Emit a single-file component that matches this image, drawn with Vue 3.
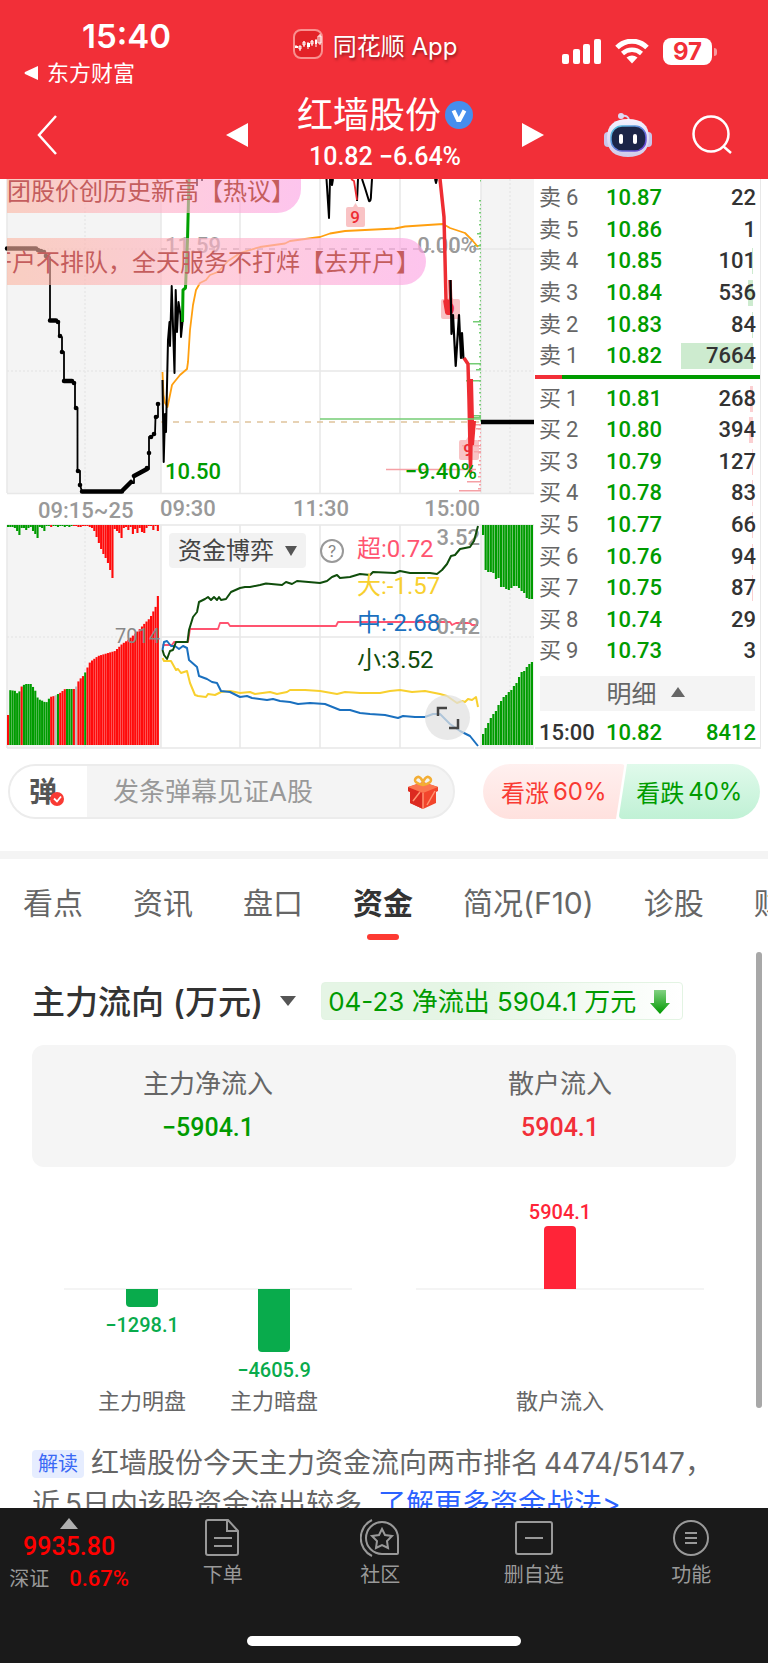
<template>
  <div class="app">
    <header class="header">
      <div class="status">
        <div class="status-left">
          <div class="time">15:40</div>
          <a href="#" class="back-app">
            <svg width="15" height="14" viewBox="0 0 15 14"><path d="M14 0v14L1 8q-1-1 0-2z" fill="#fff" /></svg>
            <span>东方财富</span>
          </a>
        </div>
        <div class="app-name">
          <svg width="30" height="30" viewBox="0 0 30 30">
            <rect x="1" y="1" width="28" height="28" rx="7" fill="#e32228" stroke="#f9908f" stroke-width="2" />
            <g stroke="#fff" stroke-width="1" fill="none">
              <path d="M3 19v-3M7 22v-5M11 18v-6M15 20v-7M19 17v-6M23 18v-8M27 16V5" />
              <path d="M6 17h2v3H6zM10 13h2v3h-2zM18 12h2v3h-2zM25 7h3v7h-3z" />
            </g>
            <path d="M2 17h3v2H2zM14 14h3v4h-3zM22 11h2v4h-2z" fill="#fff" />
          </svg>
          <span>同花顺 App</span>
        </div>
        <div class="status-right">
          <svg width="39" height="25" viewBox="0 0 39 25" fill="#fff">
            <rect x="0" y="15" width="7" height="10" rx="2" />
            <rect x="11" y="10" width="7" height="15" rx="2" />
            <rect x="21" y="5" width="7" height="20" rx="2" />
            <rect x="32" y="0" width="7" height="25" rx="2" />
          </svg>
          <svg width="34" height="25" viewBox="0 0 34 25">
            <path d="M2 8.5C10.500 0 23.500 0 32 8.500" fill="none" stroke="#fff" stroke-width="5" />
            <path d="M7.500 14.500C13 9.500 21 9.500 26.500 14.500" fill="none" stroke="#fff" stroke-width="4.500" />
            <path d="M11.500 18.500Q17 14.500 22.500 18.500L17 24.500z" fill="#fff" />
          </svg>
          <div class="battery">97</div>
        </div>
      </div>
      <nav class="nav">
        <button class="icon-btn back" aria-label="返回">
          <svg width="22" height="42" viewBox="0 0 22 42"><path d="M20 2L3 21l17 19" fill="none" stroke="#fff" stroke-width="2.500" /></svg>
        </button>
        <div class="stock">
          <button class="icon-btn" aria-label="上一只">
            <svg width="24" height="26" viewBox="0 0 24 26"><path d="M23 1v24L1 13z" fill="#fff" /></svg>
          </button>
          <div class="stock-title">
            <h1>
              红墙股份
              <svg width="28" height="28" viewBox="0 0 28 28">
                <circle cx="14" cy="14" r="14" fill="#468eed" />
                <path d="M8.500 9.500L13 19h1.500l5-9.500" fill="none" stroke="#fff" stroke-width="4" />
              </svg>
            </h1>
            <p class="din">10.82 −6.64%</p>
          </div>
          <button class="icon-btn" aria-label="下一只">
            <svg width="24" height="26" viewBox="0 0 24 26"><path d="M1 1v24l22-12z" fill="#fff" /></svg>
          </button>
        </div>
        <div class="tools">
          <button class="icon-btn" aria-label="智能助手">
            <svg width="48" height="46" viewBox="0 0 48 46">
              <defs>
                <linearGradient id="head" x1="0" y1="0" x2="0" y2="1">
                  <stop offset="0" stop-color="#f4f2ff" /><stop offset="1" stop-color="#cfcbea" />
                </linearGradient>
                <linearGradient id="ring" x1="0" y1="0" x2="1" y2="1">
                  <stop offset="0" stop-color="#58cbe0" /><stop offset="1" stop-color="#6a35d5" />
                </linearGradient>
              </defs>
              <path d="M18 4q7-1 7 5" fill="none" stroke="#d9d5ef" stroke-width="2" />
              <circle cx="17" cy="4" r="3" fill="#dedaf3" />
              <rect x="0" y="20" width="8" height="15" rx="4" fill="#c9c5ea" />
              <rect x="40" y="20" width="8" height="15" rx="4" fill="#c9c5ea" />
              <path d="M24 7C38 7 45 13 45 26S37 45 24 45 3 39 3 26 10 7 24 7z" fill="url(#head)" />
              <rect x="7" y="14" width="35" height="25" rx="11" fill="#1b2547" stroke="url(#ring)" stroke-width="1.500" />
              <rect x="15" y="22" width="4" height="10" rx="2" fill="#fff" />
              <rect x="29" y="22" width="4" height="10" rx="2" fill="#fff" />
            </svg>
          </button>
          <button class="icon-btn" aria-label="搜索">
            <svg width="40" height="40" viewBox="0 0 40 40" fill="none" stroke="#fff" stroke-width="2.500">
              <circle cx="19" cy="19" r="17.500" /><path d="M31 31l8 7" />
            </svg>
          </button>
        </div>
      </nav>
    </header>

    <main class="main">
      <section class="quote">
        <div class="chart">
          <svg class="chart-svg" viewBox="0 179 535 571">
            <path d="M7 179h154v314H7zM481 179h53v314h-53zM7 525h154v223H7zM481 525h53v223h-53z" fill="#f4f4f4" />
            <path class="grid" d="M161 179v314M240 179v314M320 179v314M400 179v314M481 179v314M161 525v223M240 525v223M320 525v223M400 525v223M481 525v223M161 371h320M481 249h53M7 493.500h527M7 525h527M161 637h320M7 748h527M7 179v314M7 525v223" />
            <path class="grid dotted" d="M85 179v314M510 179v314M85 525v223M510 525v223M7 371h154M7 249h154M481 371h53M7 637h154M481 637h53" />
            <path d="M161 249h320" stroke="#aaa" stroke-width="1.500" stroke-dasharray="6 6" />
            <path d="M161 422h320" stroke="#dfc49c" stroke-width="1.500" stroke-dasharray="6 6" />

            <!-- 价格分布 -->
            <rect v-for="(t, i) in profile" :key="'p' + i" :x="481 - t.w" :y="t.y" :width="t.w" height="1.500" :fill="t.y < 421 ? '#74cc74' : '#f5a0a5'" />

            <text x="165" y="253" class="num muted bold">11.59</text>
            <text x="477" y="253" class="num muted bold end">0.00%</text>

            <polyline :points="avgLine" class="line" stroke="#ff9f0f" stroke-width="1.800" />
            <polyline :points="preLine" class="line" stroke="#000" stroke-width="1.800" />
            <path d="M7 248.500h29M50 320.500h6M64 381h8M82 491.500h40M134 476l13-7M122 491l9-9" fill="none" stroke="#000" stroke-width="4.500" stroke-linecap="round" />
            <circle v-for="(d, i) in preDots" :key="'d' + i" :cx="d[0]" :cy="d[1]" r="2.300" />
            <polyline :points="openLine" class="line" stroke="#000" stroke-width="2" />
            <polyline points="182.500,322 183,290 185.500,288 187.500,240 189,179" class="line" stroke="#00a000" stroke-width="3" />
            <path d="M197 179v7M202 179v2M326.500 179L329 218L330 179M331 179l1 6l1-6M357 201l1-22M362 179l3 9l4 13q2 1 2-6l1-16M435 179l1 4l1-4" class="line" stroke="#000" stroke-width="2" />
            <path d="M351 179l3 2l3 19" class="line" stroke="#ee2d33" stroke-width="1.800" />

            <g fill="#f6a9ac" fill-opacity=".7">
              <path d="M348 207h5l2.500-4l2.500 4h5q2 0 2 2v16q0 2-2 2h-15q-2 0-2-2v-16q0-2 2-2z" />
              <path d="M443 299h5l2.500-4l2.500 4h5q2 0 2 2v16q0 2-2 2h-15q-2 0-2-2v-16q0-2 2-2z" />
              <path d="M461 440h5l2.500-4l2.500 4h6q2 0 2 2v16q0 2-2 2h-16q-2 0-2-2v-16q0-2 2-2z" />
            </g>
            <text x="355" y="223" class="tag">9</text>
            <text x="450" y="315" class="tag">9</text>
            <text x="468" y="456" class="tag">9</text>

            <polyline points="440,179 444,217 446,300 447,312 451,312 450,280" class="line" stroke="#ee2d33" stroke-width="3.500" />
            <path d="M446 300l2 12h3" class="line" stroke="#ee2d33" stroke-width="6" />
            <polyline points="450.500,280 451.500,334 453,315 455.700,366 459,315 461,358 462,333 463.500,359" class="line" stroke="#000" stroke-width="2.200" />
            <polyline points="464,358 468,364 469,400 470.500,472 471,440" class="line" stroke="#ee2d33" stroke-width="3.500" />
            <path d="M468 379h5l1 42h2l-2 24l-5 1z" fill="#ee2d33" />
            <path d="M320 419h161" stroke="#74cc74" stroke-width="1.500" />
            <path d="M386 469.500h90" stroke="#f5a0a5" stroke-width="1.500" />
            <path d="M481 422h53" stroke="#000" stroke-width="4.500" />

            <text x="165" y="479" class="num green bold">10.50</text>
            <text x="477" y="479" class="num green bold end">−9.40%</text>

            <text x="38" y="518" class="num muted bold">09:15~25</text>
            <text x="160" y="516" class="num muted bold">09:30</text>
            <text x="321" y="516" class="num muted bold middle">11:30</text>
            <text x="480" y="516" class="num muted bold end">15:00</text>

            <!-- 竞价量 -->
            <rect v-for="(b, i) in volumeBars" :key="'v' + i" :x="b.x" :y="b.y" :width="b.w" :height="b.h" :fill="b.c" />

            <text x="160" y="643" class="end volume">7014</text>
            <text x="480" y="545" class="num muted bold end">3.52</text>

            <!-- 资金博弈 -->
            <polyline :points="flow.super" class="line" stroke="#ff5470" stroke-width="1.800" />
            <polyline :points="flow.large" class="line" stroke="#f8d02f" stroke-width="2" />
            <polyline :points="flow.medium" class="line" stroke="#1a70bf" stroke-width="2" />
            <polyline :points="flow.small" class="line" stroke="#0f4d0b" stroke-width="2" />
            <text x="480" y="634" class="num muted bold end">0.42</text>
            <text v-for="(l, i) in legend" :key="l.text" x="357" :y="557 + i * 37" class="legend" :fill="l.color">{{ l.text }}</text>
          </svg>

          <div class="danmu">
            <div class="danmu-item first"><span>团股价创历史新高【热议】</span></div>
            <div class="danmu-item second"><span>开户不排队，全天服务不打烊【去开户】</span></div>
          </div>

          <div class="indicator">
            <label class="indicator-select">
              <select v-model="indicator" aria-label="指标">
                <option>资金博弈</option>
              </select>
              <svg width="12" height="10" viewBox="0 0 12 10"><path d="M0 0h12L6 10z" fill="#555" /></svg>
            </label>
            <button class="help" aria-label="说明">?</button>
          </div>

          <button class="expand" aria-label="全屏">
            <svg width="24" height="24" viewBox="0 0 24 24" fill="none" stroke="#444" stroke-width="2.500"><path d="M2 10V2h9M13 22h9v-9" /></svg>
          </button>
        </div>

        <div class="book">
          <div class="rows sells">
            <div v-for="r in sells" :key="r.label" class="row">
              <span class="lv">卖<i>{{ r.label }}</i></span>
              <span class="price">{{ r.price }}</span>
              <span class="qty"><b class="depth" :style="{ width: depth(r.qty) }"></b><em>{{ r.qty }}</em></span>
            </div>
          </div>
          <div class="ratio"></div>
          <div class="rows buys">
            <div v-for="r in buys" :key="r.label" class="row">
              <span class="lv">买<i>{{ r.label }}</i></span>
              <span class="price">{{ r.price }}</span>
              <span class="qty"><b class="depth" :style="{ width: depth(r.qty) }"></b><em>{{ r.qty }}</em></span>
            </div>
          </div>
          <button class="detail">
            明细
            <svg width="14" height="10" viewBox="0 0 14 10"><path d="M0 10h14L7 0z" fill="#666" /></svg>
          </button>
          <div class="row last">
            <span class="deal-time">15:00</span>
            <span class="price">10.82</span>
            <span class="qty"><em>8412</em></span>
          </div>
        </div>
      </section>

      <section class="vote">
        <div class="comment">
          <button class="danmu-toggle" aria-label="弹幕开关">
            弹
            <svg width="14" height="14" viewBox="0 0 14 14"><circle cx="7" cy="7" r="7" fill="#f93a33" /><path d="M4 6.500l3 3l4-5" fill="none" stroke="#fff" stroke-width="1.800" /></svg>
          </button>
          <input v-model="comment" type="text" placeholder="发条弹幕见证A股" aria-label="发条弹幕">
          <button class="icon-btn gift" aria-label="礼物">
            <svg width="32" height="34" viewBox="0 0 32 34">
              <path d="M1 12l15-5l15 5v4l-2 1v11l-13 6l-13-6V17l-2-1z" fill="#f2452c" />
              <path d="M1 12l15 6v16L3 28V17l-2-1z" fill="#dc2a20" />
              <path d="M1 12l15-5l15 5l-15 6z" fill="#fb7650" />
              <path d="M16 18v16M6 26l7-9M20 30l8-14" stroke="#ff9270" stroke-width="1.500" />
              <path d="M16 10C10 9 6 6 9 3s7 1 7 7c0-6 4-10 7-7s-1 6-7 7z" fill="none" stroke="#f3ae35" stroke-width="2.500" />
            </svg>
          </button>
        </div>
        <div class="sides">
          <button class="side up"><span>看涨</span><span>60%</span></button>
          <button class="side down"><span>看跌</span><span>40%</span></button>
        </div>
      </section>

      <nav class="tabs">
        <button v-for="t in tabs" :key="t" :class="{ active: activeTab === t }" @click="activeTab = t">{{ t }}</button>
      </nav>

      <section class="funds">
        <div class="funds-head">
          <h2>主力流向 (万元)</h2>
          <button class="icon-btn" aria-label="切换">
            <svg width="16" height="10" viewBox="0 0 16 10"><path d="M0 0h16L8 10z" fill="#555" /></svg>
          </button>
          <div class="net">
            <span>04-23 净流出 5904.1 万元</span>
            <svg width="20" height="25" viewBox="0 0 20 25">
              <defs>
                <linearGradient id="down" x1="0" y1="0" x2="0" y2="1">
                  <stop offset="0" stop-color="#82d182" /><stop offset="1" stop-color="#009900" />
                </linearGradient>
              </defs>
              <path d="M4 1h12v13h4L10 25L0 14h4z" fill="url(#down)" />
            </svg>
          </div>
        </div>

        <div class="card">
          <div><p>主力净流入</p><strong class="green">−5904.1</strong></div>
          <div><p>散户流入</p><strong class="red">5904.1</strong></div>
        </div>

        <div class="bars">
          <div v-for="(group, g) in barGroups" :key="g" class="bar-group">
            <div v-for="b in group" :key="b.name" class="bar-col" :class="b.value > 0 ? 'pos' : 'neg'">
              <div class="upper">
                <template v-if="b.value > 0"><span>{{ b.text }}</span><i :style="{ height: b.height + 'px' }"></i></template>
              </div>
              <div class="lower">
                <template v-if="b.value < 0"><i :style="{ height: b.height + 'px' }"></i><span>{{ b.text }}</span></template>
              </div>
              <p>{{ b.name }}</p>
            </div>
          </div>
        </div>

        <p class="explain">
          <span class="explain-tag">解读</span>红墙股份今天主力资金流向两市排名<span class="figure">4474/5147</span>，<br>近<span class="figure">5</span>日内该股资金流出较多, <a href="#">了解更多资金战法&gt;</a>
        </p>
        <div class="scrollbar"></div>
      </section>
    </main>

    <footer class="footer">
      <div class="footer-row">
        <button class="index">
          <svg width="18" height="11" viewBox="0 0 18 11"><path d="M0 11h18L9 0z" fill="#b0b0b0" /></svg>
          <strong>9935.80</strong>
          <span class="index-sub"><span>深证</span><b>0.67%</b></span>
        </button>
        <button class="item">
          <svg width="40" height="40" viewBox="0 0 40 40"><path d="M5 2h20l10 11v22q0 2-2 2H5q-2 0-2-2V4q0-2 2-2zM24 3v10h10M11 20h18M11 28h18" /></svg>
          下单
        </button>
        <button class="item">
          <svg width="40" height="40" viewBox="0 0 40 40">
            <path d="M37 36H22A16 16 0 1 1 38 20v15q0 1-1 1zM12 2A20 20 0 0 0 12 38" />
            <path d="M22 11l3 6l7 1l-5 5l1 7l-6-3l-6 3l1-7l-5-5l7-1z" />
          </svg>
          社区
        </button>
        <button class="item">
          <svg width="40" height="40" viewBox="0 0 40 40"><rect x="2" y="4" width="36" height="32" rx="2" /><path d="M11 20h18" /></svg>
          删自选
        </button>
        <button class="item">
          <svg width="40" height="40" viewBox="0 0 40 40"><circle cx="20" cy="20" r="17" /><path d="M14 15h12M14 20h12M14 25h12" /></svg>
          功能
        </button>
      </div>
      <div class="home"></div>
    </footer>
  </div>
</template>

<script setup>
import { ref } from 'vue';

const indicator = ref('资金博弈');
const comment = ref('');
const activeTab = ref('资金');
const tabs = ['看点', '资讯', '盘口', '资金', '简况(F10)', '诊股', '财务'];

const sells = [
  { label: 6, price: '10.87', qty: 22 },
  { label: 5, price: '10.86', qty: 1 },
  { label: 4, price: '10.85', qty: 101 },
  { label: 3, price: '10.84', qty: 536 },
  { label: 2, price: '10.83', qty: 84 },
  { label: 1, price: '10.82', qty: 7664 }
];

const buys = [268, 394, 127, 83, 66, 94, 87, 29, 3].map((qty, i) => ({
  label: i + 1,
  price: (10.81 - i * 0.01).toFixed(2),
  qty
}));

const depth = (qty) => Math.round((qty / 7664) * 72) + 'px';

const legend = [
  { text: '超:0.72', color: '#ff5470' },
  { text: '大:-1.57', color: '#f8d02f' },
  { text: '中:-2.68', color: '#1a70bf' },
  { text: '小:3.52', color: '#0f4d0b' }
];

const barGroups = [
  [
    { name: '主力明盘', value: -1298.1, text: '−1298.1', height: 18 },
    { name: '主力暗盘', value: -4605.9, text: '−4605.9', height: 63 }
  ],
  [{ name: '散户流入', value: 5904.1, text: '5904.1', height: 63 }]
];

// 分时图
const avgLine = '162.500,372 163.500,395 165,403 167.500,407 170,395 172,385 173.500,383 180,375 187,369 188,362 190,330 193,305 196,290 200,283 206,280 210,275 218,272 228,261 240,253 260,247 285,243.500 290,241 320,237 330,233.500 345,231 395,228.500 405,226.500 443,224 450,228 465,233 472,240 478,247';
const preLine = '7,248.500 36,248.500 40,251 45,253 46,256 50,257 50,320 56,320 59,323 59,336 62,337 62,352 64,352 64,381 72,381 75,384 75,408 77.500,408 77.500,471 80,471 80,485 82,491.500 122,491.500 130,483 134,483 134,476 142,472 147,469 149,469 149,453 149,437 151,437 155,434 155.500,417 158,417 158,404';
const openLine = '162.500,380 163.700,462 165,414 166,432 168,340 169.500,322 170,346 171.700,286 174.500,373 175.700,290 177,332 178.500,302 180.500,315 181,337 182.500,322';
const preDots = [[38, 250], [41, 251], [44, 252], [46, 256], [58, 322], [60, 336], [62, 352], [74, 383], [76, 408], [78, 471], [80, 485], [149, 453], [147, 468], [151, 437], [154, 434], [156, 417], [158, 404]];

const bigTicks = [[180, 1], [233, 4], [245, 7], [321, 8], [324, 3], [363, 14], [369, 5], [380, 15], [415, 11], [417, 11], [424, 10], [428, 5], [445, 19], [451, 7], [481, 14], [490, 22]];
const profile = bigTicks.map(([y, w]) => ({ y, w }));
for (let y = 200; y < 492; y += 4) {
  profile.push({ y, w: 1 + ((y * 7) % 3) * (y > 421 ? 1 : 0.5) });
}

// 资金博弈曲线
const flow = {
  super: '162.500,645 172,645 174,642 188,642 190,629 218,629 220,623 228,623 230,626 336,626 338,622 450,622 452,625 456,623 470,623 472,625 478,625',
  large: '162.500,658 164,661 171,661 176,670 178,669 181,673 187,671 190,683 195,695 198,696 206,697 208,694 215,695 221,692 230,691 240,693 250,692 255,694 270,692 277,694 287,692 290,690 305,690 320,691 337,694 345,692 360,693 380,693 390,691 400,690 412,692 425,691 440,694 447,696 457,703 462,701 465,702 468,699 472,700 476,697 478,707',
  medium: '162.500,650 164,642 167,641 171,646 175,646 179,649 183,646 187,648 189,660 197,667 199,676 207,679 212,682 217,683 221,691 230,692 240,697 247,696 252,698 267,700 273,699 280,701 290,702 298,704 310,703 325,704 340,710 350,710 360,713 370,714 385,715 398,718 403,716 415,717 425,717 433,714 440,714 450,724 460,731 466,734 470,736 478,746',
  small: '162.500,650 164,655 167,659 170,651 173,650 176,642 187.500,642 189,630 193,617 197,612 199,602 205,599 208,597 211,600 214,597 217,600 219,597 221,600 226,599 231,592 240,588 245,587 250,587 260,585 266,583.500 282,585 286,582 292,584 297,581 320,583 327,581 332,577 337,575 340,578 350,577 360,574 370,575 373,572 395,573 400,571 410,573 430,573 437,574 442,570 447,564 451,556 455,555 460,549 470,547 474,541 478,526'
};

const interpolate = (keys, x) => {
  const i = keys.findIndex(k => k[0] >= x);
  if (i < 0) return keys[keys.length - 1][1];
  if (i === 0) return keys[0][1];
  const [x0, y0] = keys[i - 1];
  const [x1, y1] = keys[i];
  return y0 + ((y1 - y0) * (x - x0)) / (x1 - x0);
};

const RED = '#ff0a0a';
const GREEN = '#009b00';
const GREY = '#bbbbbb';

const auctionTops = [[8, 715], [9, 690], [16, 691], [18, 695], [21, 687], [25, 684], [31, 684], [35, 690], [38, 699], [43, 701], [46, 703], [50, 697], [54, 696], [60, 693], [65, 689], [75, 689], [79, 680], [84, 675], [90, 662], [98, 656], [108, 653], [115, 651], [122, 644], [128, 640], [138, 631], [145, 623], [150, 618], [156, 606], [158, 595]];
const auctionHang = [2, 2, 2, 3, 6, 10, 3, 3, 5, 3, 2, 6, 9, 13, 2, 3, 6, 1, 1, 2, 1, 1, 2, 1, 1, 2, 1, 2, 1, 1, 1, 2, 2, 1, 1, 1, 2, 3, 6, 12, 18, 24, 29, 33, 38, 45, 53, 4, 6, 8, 13, 3, 2, 5, 2, 9, 4, 8, 3, 7, 8, 3, 1, 1, 5, 1, 6];
const closeHang = [10, 45, 47, 47, 48, 54, 53, 62, 62, 64, 65, 63, 61, 61, 63, 66, 68, 73, 74, 74];
const closeTops = [734, 728, 723, 718, 714, 711, 705, 701, 697, 695, 692, 690, 686, 683, 677, 672, 671, 667, 664, 662];

const volumeBars = [];
const green = [22, 26, 27, 28, 34];
auctionHang.forEach((h, i) => {
  const x = 7 + i * 2.27;
  const top = interpolate(auctionTops, x + 1);
  let c = i > 18 ? RED : GREEN;
  if (i === 0 || i === 6) c = RED;
  if (i === 21 || i === 30) c = GREY;
  if (green.includes(i)) c = GREEN;
  volumeBars.push({ x, y: top, w: 2.1, h: 745 - top, c });
  volumeBars.push({ x, y: 525, w: 2.1, h, c: i > 28 || i === 19 ? RED : GREEN });
});
closeHang.forEach((h, i) => {
  const x = 482 + i * 2.57;
  volumeBars.push({ x, y: 525, w: 2.2, h, c: GREEN });
  volumeBars.push({ x, y: closeTops[i], w: 2.2, h: 745 - closeTops[i], c: GREEN });
});
</script>

<style>
body {
  background-color: #fff;
}
</style>

<style scoped>
.app {
  height: 100vh;
  display: flex;
  flex-direction: column;
  background-color: #fff;
  color: #333;
  font-family: Inter, 'Noto Sans CJK SC', sans-serif;
}

.app * {
  box-sizing: border-box;
}

h1, h2, p {
  margin: 0;
  font-weight: 400;
}

button {
  padding: 0;
  border: none;
  background: none;
  font-family: inherit;
  color: inherit;
  cursor: pointer;
}

svg {
  display: block;
}

i, em {
  font-style: normal;
}

a {
  text-decoration: none;
}

.icon-btn {
  display: flex;
}

/* 顶部 */
.header {
  flex: none;
  height: 179px;
  background-color: #f22f38;
  color: #fff;
}

.status {
  display: grid;
  grid-template-columns: 1fr auto 1fr;
  height: 90px;
  padding: 14px 56px 0 24px;
}

.status-left {
  min-width: 0;
}

.time {
  padding-left: 58px;
  font-size: 33px;
  font-weight: 600;
  line-height: 44px;
}

.back-app {
  display: flex;
  align-items: center;
  gap: 8px;
  color: #fff;
  font-size: 22px;
  line-height: 30px;
}

.app-name {
  display: flex;
  align-items: center;
  gap: 10px;
  height: 60px;
  margin-left: 14px;
  font-size: 24px;
  text-shadow: 1px 2px 3px rgba(0, 0, 0, 0.4);
}

.status-right {
  display: flex;
  justify-content: flex-end;
  align-items: center;
  gap: 14px;
  height: 74px;
}

.battery {
  position: relative;
  width: 49px;
  border-radius: 8px;
  background-color: #fff;
  color: #f22f38;
  font-size: 24px;
  font-weight: 700;
  line-height: 27px;
  text-align: center;
}

.battery::after {
  content: '';
  position: absolute;
  right: -5px;
  top: 10px;
  width: 3px;
  height: 8px;
  border-radius: 0 4px 4px 0;
  background-color: #f79a9f;
}

.nav {
  display: grid;
  grid-template-columns: 1fr auto 1fr;
  align-items: center;
  height: 89px;
  padding: 0 34px 0 36px;
}

.stock {
  display: flex;
  align-items: center;
  gap: 48px;
}

.stock-title {
  display: flex;
  flex-direction: column;
  align-items: center;
  padding-bottom: 3px;
}

.stock-title h1 {
  display: flex;
  align-items: center;
  gap: 4px;
  font-size: 36px;
  line-height: 48px;
}

.din {
  font-family: Roboto, 'Noto Sans CJK SC', sans-serif;
  font-size: 25px;
  font-weight: 500;
  line-height: 36px;
}

.tools {
  display: flex;
  justify-content: flex-end;
  align-items: center;
  gap: 40px;
  padding-right: 2px;
}

/* 行情 */
.main {
  flex: 1;
  min-height: 0;
  overflow: hidden;
}

.quote {
  display: flex;
  align-items: flex-start;
  padding-right: 7px;
}

.chart {
  position: relative;
  flex: 1;
  min-width: 0;
}

.chart-svg {
  width: 100%;
}

.grid {
  fill: none;
  stroke: #e8e8e8;
  stroke-width: 1.5;
}

.dotted {
  stroke-dasharray: 2 2;
}

.line {
  fill: none;
  stroke-linejoin: round;
}

.num {
  font-family: Roboto, sans-serif;
  font-size: 22px;
}

.bold {
  font-weight: 500;
}

.end {
  text-anchor: end;
}

.middle {
  text-anchor: middle;
}

.muted {
  fill: #999;
}

.volume {
  font-family: Roboto, sans-serif;
  font-size: 20px;
  fill: #888;
}

.green {
  color: #009b00;
  fill: #009b00;
}

.red {
  color: #f22f38;
}

.tag {
  font: 500 17px Roboto, sans-serif;
  fill: #ee2d33;
  text-anchor: middle;
}

.legend {
  font-family: Roboto, 'Noto Sans CJK SC', sans-serif;
  font-size: 24px;
}

.danmu {
  position: absolute;
  top: 0;
  left: 7px;
}

.danmu-item {
  display: flex;
  justify-content: flex-end;
  align-items: center;
  overflow: hidden;
  white-space: nowrap;
  padding-right: 6px;
  border-radius: 0 24px 24px 0;
  background: linear-gradient(90deg, rgba(252, 181, 160, 0.6), rgba(255, 180, 200, 0.65) 50%, rgba(252, 165, 228, 0.65));
  color: #c45d5d;
  font-size: 24px;
}

.first {
  width: 294px;
  height: 34px;
  padding-bottom: 14px;
  border-top-right-radius: 0;
}

.second {
  width: 419px;
  height: 47px;
  margin-top: 25px;
  padding-bottom: 2px;
}

.indicator {
  position: absolute;
  top: 354px;
  left: 169px;
  display: flex;
  align-items: center;
  gap: 14px;
}

.indicator-select {
  display: flex;
  align-items: center;
  gap: 11px;
  height: 35px;
  padding: 0 9px;
  border-radius: 4px;
  background-color: #f2f2f2;
}

.indicator-select select {
  appearance: none;
  border: none;
  padding: 0;
  background: none;
  color: #444;
  font-family: inherit;
  font-size: 24px;
}

.help {
  width: 24px;
  height: 24px;
  border: 2px solid #999;
  border-radius: 50%;
  color: #888;
  font-size: 16px;
  line-height: 20px;
}

.expand {
  position: absolute;
  right: 65px;
  bottom: 10px;
  display: flex;
  align-items: center;
  justify-content: center;
  width: 45px;
  height: 45px;
  border-radius: 50%;
  background-color: rgba(226, 226, 226, 0.75);
}

.book {
  flex: none;
  width: 226px;
  height: 570px;
  padding-top: 3px;
  border-right: 1px solid #e8e8e8;
  border-bottom: 2px solid #e8e8e8;
  font-family: Roboto, 'Noto Sans CJK SC', sans-serif;
  font-size: 22px;
}

.rows {
  display: flex;
  flex-direction: column;
}

.sells {
  height: 190px;
}

.buys {
  height: 284px;
  margin-top: 4px;
}

.row {
  flex: 1;
  display: grid;
  grid-template-columns: 67px 64px 1fr;
  align-items: center;
  padding: 0 4px 0 4px;
  line-height: 26px;
}

.lv {
  color: #666;
}

.lv i {
  margin-left: 5px;
}

.price {
  color: #009b00;
  font-weight: 500;
}

.qty {
  position: relative;
  text-align: right;
  font-weight: 500;
}

.qty em {
  position: relative;
}

.depth {
  position: absolute;
  right: 3px;
  top: 0;
  height: 26px;
  background-color: #cdebcf;
}

.buys .depth {
  background-color: #fbd0d2;
}

.ratio {
  height: 4px;
  margin: 3px 0;
  background: linear-gradient(90deg, #f22f38 27px, #009b00 27px);
}

.detail {
  display: flex;
  align-items: center;
  justify-content: center;
  gap: 14px;
  width: 215px;
  height: 35px;
  margin: 9px 0 9px 5px;
  padding: 0 4px 4px 0;
  background-color: #f4f4f4;
  color: #666;
  font-size: 25px;
}

.row.last .qty {
  color: #009b00;
}

.deal-time {
  font-weight: 500;
}

/* 弹幕与投票 */
.vote {
  display: flex;
  gap: 28px;
  padding: 14px 8px 32px;
  border-bottom: 8px solid #f4f4f4;
}

.comment {
  flex: 1;
  display: flex;
  align-items: center;
  height: 55px;
  overflow: hidden;
  border: 2px solid #ececec;
  border-radius: 28px;
  background-color: #f4f4f4;
  padding-right: 14px;
}

.danmu-toggle {
  flex: none;
  display: flex;
  align-items: center;
  justify-content: center;
  width: 77px;
  height: 100%;
  padding: 0 4px 4px 0;
  background-color: #fff;
  color: #555;
  font-size: 28px;
  font-weight: 700;
}

.danmu-toggle svg {
  margin: 18px 0 0 -7px;
}

.comment input {
  flex: 1;
  min-width: 0;
  padding: 0 26px;
  border: none;
  outline: none;
  background: none;
  font-family: inherit;
  font-size: 26px;
}

.comment input::placeholder {
  color: #999;
  opacity: 1;
}

.sides {
  flex: none;
  display: flex;
  width: 277px;
}

.side {
  flex: 1;
  display: flex;
  align-items: center;
  justify-content: center;
  gap: 4px;
  height: 55px;
  font-size: 24px;
}

.up {
  margin-right: -3px;
  border-radius: 28px 4px 4px 28px;
  background: linear-gradient(#fff0ef, #ffe1de);
  clip-path: polygon(0 0, 100% 0, 94% 100%, 0 100%);
  color: #f93a33;
}

.down {
  margin-left: -3px;
  border-radius: 4px 28px 28px 4px;
  background: linear-gradient(#e0faeb, #c0f1d5);
  clip-path: polygon(6% 0, 100% 0, 100% 100%, 0 100%);
  color: #009b00;
}

/* 标签 */
.tabs {
  display: flex;
  gap: 50px;
  height: 90px;
  padding: 0 23px;
  overflow: hidden;
  white-space: nowrap;
}

.tabs button {
  position: relative;
  flex: none;
  padding-bottom: 6px;
  color: #666;
  font-size: 30px;
}

.tabs .active {
  color: #333;
  font-weight: 700;
}

.tabs .active::after {
  content: '';
  position: absolute;
  left: 50%;
  bottom: 9px;
  width: 32px;
  height: 6px;
  margin-left: -16px;
  border-radius: 3px;
  background-color: #fd3a32;
}

/* 资金 */
.funds {
  position: relative;
  padding: 32px 32px 0;
}

.funds-head {
  display: flex;
  align-items: center;
  gap: 17px;
  height: 40px;
}

.funds-head h2 {
  padding-bottom: 2px;
  font-size: 33px;
  font-weight: 500;
}

.net {
  display: flex;
  align-items: center;
  gap: 14px;
  height: 38px;
  margin-left: 8px;
  padding: 0 12px 0 6px;
  border: 1px solid #e3f4e3;
  border-radius: 4px;
  background: linear-gradient(90deg, #e5f5e5 40%, #fff);
  color: #009b00;
  font-size: 26px;
  white-space: nowrap;
}

.net span {
  padding-bottom: 4px;
}

.card {
  display: grid;
  grid-template-columns: 1fr 1fr;
  align-items: center;
  height: 122px;
  margin-top: 24px;
  border-radius: 12px;
  background-color: #f5f5f5;
  text-align: center;
}

.card p {
  color: #666;
  font-size: 26px;
  line-height: 44px;
}

.card strong {
  display: block;
  font-family: Roboto, sans-serif;
  font-size: 25px;
  font-weight: 500;
  line-height: 44px;
}

.bars {
  display: grid;
  grid-template-columns: 1fr 1fr;
  gap: 64px;
  padding: 32px 32px 0;
}

.bar-group {
  display: flex;
  justify-content: center;
  gap: 44px;
  background: linear-gradient(#f4f4f4, #f4f4f4) 0 89px / 100% 2px no-repeat;
}

.bar-col {
  width: 88px;
  text-align: center;
}

.bar-col p {
  color: #666;
  font-size: 22px;
  line-height: 26px;
}

.bar-col i {
  width: 32px;
}

.bar-col span {
  font-family: Roboto, sans-serif;
  font-size: 20px;
  font-weight: 500;
}

.upper, .lower {
  display: flex;
  flex-direction: column;
  align-items: center;
}

.upper {
  height: 90px;
  justify-content: flex-end;
  gap: 2px;
}

.lower {
  height: 99px;
  gap: 6px;
}

.pos span {
  color: #ff2438;
}

.pos i {
  border-radius: 4px 4px 0 0;
  background-color: #ff2438;
}

.neg span {
  color: #09ab4c;
}

.neg i {
  border-radius: 0 0 4px 4px;
  background-color: #09ab4c;
}

.explain {
  margin-top: 29px;
  color: #666;
  font-size: 28px;
  line-height: 41px;
}

.explain-tag {
  display: inline-block;
  margin-right: 7px;
  padding: 0 6px;
  border-radius: 4px;
  background-color: #e6edff;
  color: #3a69f5;
  font-size: 20px;
  line-height: 28px;
  vertical-align: 2px;
}

.figure {
  margin-left: 5px;
}

.explain a {
  color: #2b62ff;
}

.scrollbar {
  position: absolute;
  top: 3px;
  right: 6px;
  width: 6px;
  height: 456px;
  border-radius: 3px;
  background-color: #a8a8a8;
}

/* 底部 */
.footer {
  position: relative;
  flex: none;
  height: 155px;
  background-color: #1a1a1a;
  color: #999;
}

.footer-row {
  display: grid;
  grid-template-columns: 18% 22% 19% 21% 20%;
  padding-top: 10px;
}

.index {
  display: flex;
  flex-direction: column;
  align-items: center;
  color: #f00;
  font-family: Roboto, 'Noto Sans CJK SC', sans-serif;
}

.index strong {
  font-size: 25px;
  font-weight: 500;
  line-height: 36px;
}

.index-sub {
  display: flex;
  gap: 20px;
  font-size: 20px;
  line-height: 28px;
}

.index-sub span {
  color: #999;
}

.index-sub b {
  font-weight: 500;
  font-size: 22px;
}

.item {
  display: flex;
  flex-direction: column;
  align-items: center;
  gap: 3px;
  font-size: 20px;
  line-height: 28px;
}

.item svg {
  fill: none;
  stroke: #999;
  stroke-width: 2;
}

.home {
  position: absolute;
  left: 50%;
  bottom: 17px;
  width: 274px;
  height: 10px;
  margin-left: -137px;
  border-radius: 5px;
  background-color: #fff;
}
</style>
